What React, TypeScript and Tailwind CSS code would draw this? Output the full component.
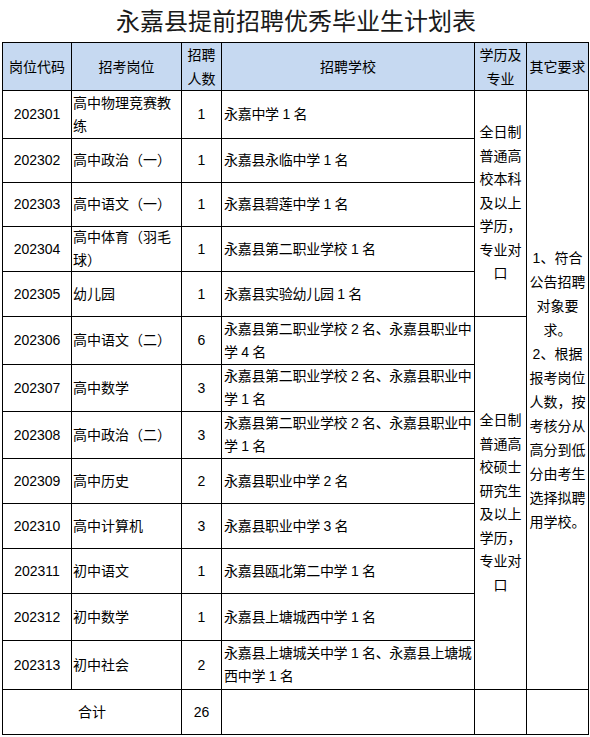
const rows = [
  { code: "202301", post: ["高中物理竞赛教", "练"], n: 1, school: ["永嘉中学 1 名"] },
  { code: "202302", post: ["高中政治（一）"], n: 1, school: ["永嘉县永临中学 1 名"] },
  { code: "202303", post: ["高中语文（一）"], n: 1, school: ["永嘉县碧莲中学 1 名"] },
  { code: "202304", post: ["高中体育（羽毛", "球）"], n: 1, school: ["永嘉县第二职业学校 1 名"] },
  { code: "202305", post: ["幼儿园"], n: 1, school: ["永嘉县实验幼儿园 1 名"] },
  { code: "202306", post: ["高中语文（二）"], n: 6, school: ["永嘉县第二职业学校 2 名、永嘉县职业中", "学 4 名"] },
  { code: "202307", post: ["高中数学"], n: 3, school: ["永嘉县第二职业学校 2 名、永嘉县职业中", "学 1 名"] },
  { code: "202308", post: ["高中政治（二）"], n: 3, school: ["永嘉县第二职业学校 2 名、永嘉县职业中", "学 1 名"] },
  { code: "202309", post: ["高中历史"], n: 2, school: ["永嘉县职业中学 2 名"] },
  { code: "202310", post: ["高中计算机"], n: 3, school: ["永嘉县职业中学 3 名"] },
  { code: "202311", post: ["初中语文"], n: 1, school: ["永嘉县瓯北第二中学 1 名"] },
  { code: "202312", post: ["初中数学"], n: 1, school: ["永嘉县上塘城西中学 1 名"] },
  { code: "202313", post: ["初中社会"], n: 2, school: ["永嘉县上塘城关中学 1 名、永嘉县上塘城", "西中学 1 名"] },
];

const edu1 = ["全日制", "普通高", "校本科", "及以上", "学历，", "专业对", "口"];
const edu2 = ["全日制", "普通高", "校硕士", "研究生", "及以上", "学历，", "专业对", "口"];
const other = ["1、符合", "公告招聘", "对象要", "求。", "2、根据", "报考岗位", "人数，按", "考核分从", "高分到低", "分由考生", "选择拟聘", "用学校。"];

const center = "bg-white flex flex-col items-center justify-center text-center";
const left = "bg-white flex flex-col justify-center";
const head = "bg-[#c6d9f1] flex flex-col items-center justify-center text-center leading-[24px] whitespace-nowrap";

function Lines({ items }: { items: string[] }) {
  return (
    <>
      {items.map((t, i) => (
        <div key={i} className="whitespace-nowrap">{t}</div>
      ))}
    </>
  );
}

export default function App() {
  return (
    <div className="w-[590px] h-[737px] overflow-hidden bg-white text-black font-['Liberation_Sans','Noto_Sans_CJK_SC',sans-serif] text-[14px] leading-[23px]">
      <div className="h-[42px] flex items-center justify-center pl-[2px] pb-[2px] text-[24px] leading-[30px] text-[#1a1a1a] font-['Noto_Sans_CJK_SC',sans-serif]">
        永嘉县提前招聘优秀毕业生计划表
      </div>
      <div className="pl-[2px]">
        <div className="w-[587px] grid grid-cols-[68px_109px_39px_252px_51px_61px] grid-rows-[47px_47px_43px_43px_44px_44px_47px_46px_46px_44px_44px_44px_46px_48px_44px] gap-px p-px bg-black">
          <div className={head}>岗位代码</div>
          <div className={head}>招考岗位</div>
          <div className={head}><span>招聘</span><span>人数</span></div>
          <div className={head}>招聘学校</div>
          <div className={head}><span>学历及</span><span>专业</span></div>
          <div className={head}>其它要求</div>

          <div className={`${center} col-start-5 row-start-2 row-span-5 leading-[23.5px]`}><Lines items={edu1} /></div>
          <div className={`${center} col-start-5 row-start-7 row-span-8 leading-[23.5px]`}><Lines items={edu2} /></div>
          <div className={`${center} col-start-6 row-start-2 row-span-13 leading-[24px]`}><Lines items={other} /></div>

          {rows.map((r) => [
            <div key={r.code + "a"} className={center}>{r.code}</div>,
            <div key={r.code + "b"} className={`${left} pl-[1px]`}><Lines items={r.post} /></div>,
            <div key={r.code + "c"} className={center}>{r.n}</div>,
            <div key={r.code + "d"} className={`${left} pl-[2px] tracking-[-0.3px]`}><Lines items={r.school} /></div>,
          ])}

          <div className={`${center} col-span-2`}>合计</div>
          <div className={center}>26</div>
          <div className="bg-white"></div>
          <div className="bg-white"></div>
          <div className="bg-white"></div>
        </div>
      </div>
    </div>
  );
}
